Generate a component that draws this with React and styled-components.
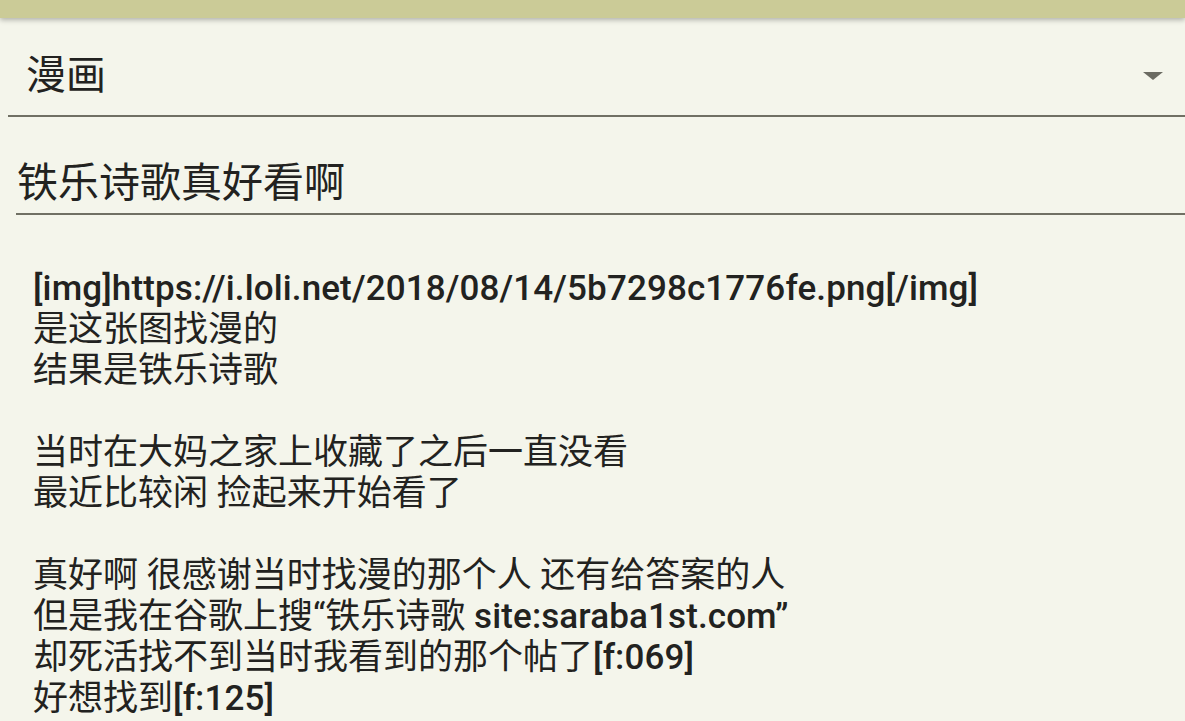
import styled, { createGlobalStyle } from 'styled-components'

const GlobalStyle = createGlobalStyle`
  html, body {
    margin: 0;
    padding: 0;
    background: #f4f5eb;
  }
  body {
    font-family: Roboto, "Noto Sans CJK SC", sans-serif;
    color: #222220;
    overflow: hidden;
  }
`

const Page = styled.div`
  width: 1185px;
  height: 721px;
  display: flex;
  flex-direction: column;
  overflow: hidden;
`

const TopBar = styled.div`
  height: 18px;
  flex: none;
  background: #cbcb97;
  box-shadow: 0 2px 5px rgba(0, 0, 0, 0.28);
  position: relative;
  z-index: 1;
`

const Spinner = styled.div`
  margin-left: 8px;
  padding: 35px 0 16px 18px;
  display: flex;
  align-items: center;
  justify-content: space-between;
  border-bottom: 2px solid #707064;
`

const SpinnerText = styled.span`
  font-size: 40px;
  line-height: 46px;
`

const Arrow = styled.span`
  width: 0;
  height: 0;
  margin-right: 22px;
  border-left: 10px solid transparent;
  border-right: 10px solid transparent;
  border-top: 8px solid #6b6b62;
`

const TitleField = styled.div`
  margin: 42px 0 0 16px;
  padding: 0 0 6px 1px;
  border-bottom: 2px solid #707064;
  font-size: 41px;
  line-height: 48px;
`

const Body = styled.div`
  padding: 53px 0 0 33px;
  font-size: 35px;
  line-height: 41px;
  white-space: pre;
`

const Line = styled.div`
  min-height: 41px;
`

const Latin = styled.span`
  font-weight: 500;
  letter-spacing: 0.12px;
`

const lines = [
  [['l', '[img]https://i.loli.net/2018/08/14/5b7298c1776fe.png[/img]']],
  [['c', '是这张图找漫的']],
  [['c', '结果是铁乐诗歌']],
  [],
  [['c', '当时在大妈之家上收藏了之后一直没看']],
  [['c', '最近比较闲 捡起来开始看了']],
  [],
  [['c', '真好啊 很感谢当时找漫的那个人 还有给答案的人']],
  [['c', '但是我在谷歌上搜“铁乐诗歌 '], ['l', 'site:saraba1st.com”']],
  [['c', '却死活找不到当时我看到的那个帖了'], ['l', '[f:069]']],
  [['c', '好想找到'], ['l', '[f:125]']],
]

const App = () => {
  return (
    <Page>
      <GlobalStyle />
      <TopBar />
      <Spinner>
        <SpinnerText>漫画</SpinnerText>
        <Arrow />
      </Spinner>
      <TitleField>铁乐诗歌真好看啊</TitleField>
      <Body>
        {lines.map((parts, i) => (
          <Line key={i}>
            {parts.map(([kind, text], j) =>
              kind === 'l' ? <Latin key={j}>{text}</Latin> : <span key={j}>{text}</span>
            )}
          </Line>
        ))}
      </Body>
    </Page>
  )
}

export default App
